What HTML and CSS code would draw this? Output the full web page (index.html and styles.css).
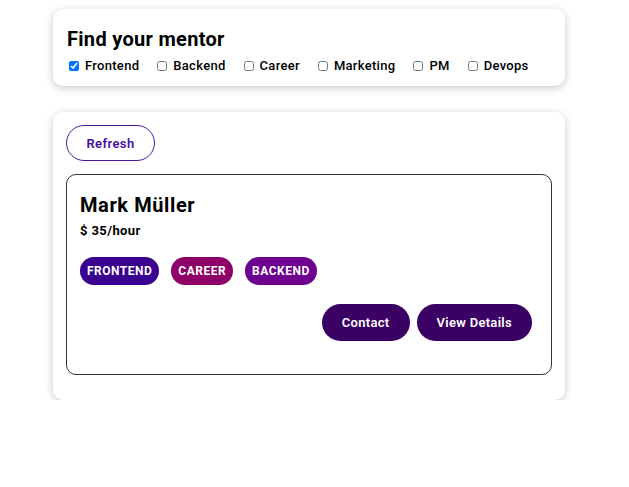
FILE: index.html
```html
<!DOCTYPE html>
<html>
<head>
<meta charset="utf-8">
<link rel="stylesheet" href="styles.css">
</head>
<body>
<div class="page">
  <section class="card filter">
    <h1 class="title">Find your mentor</h1>
    <div class="options">
      <label class="opt"><input type="checkbox" checked> Frontend</label>
      <label class="opt"><input type="checkbox"> Backend</label>
      <label class="opt"><input type="checkbox"> Career</label>
      <label class="opt"><input type="checkbox"> Marketing</label>
      <label class="opt"><input type="checkbox"> PM</label>
      <label class="opt"><input type="checkbox"> Devops</label>
    </div>
  </section>
  <section class="card list">
    <button class="refresh">Refresh</button>
    <article class="mentor">
      <h2 class="name">Mark Müller</h2>
      <div class="price">$ 35/hour</div>
      <div class="tags">
        <span class="tag tag-frontend">FRONTEND</span>
        <span class="tag tag-career">CAREER</span>
        <span class="tag tag-backend">BACKEND</span>
      </div>
      <div class="actions">
        <button class="btn">Contact</button>
        <button class="btn">View Details</button>
      </div>
    </article>
  </section>
</div>
</body>
</html>
```
FILE: styles.css
```css
* { box-sizing: border-box; }
html, body { margin: 0; padding: 0; background: #fff; }
body {
  font-family: Roboto, "Liberation Sans", sans-serif;
  color: #000;
}
.page {
  width: 512px;
  margin: 9px 0 0 53px;
  display: flex;
  flex-direction: column;
  gap: 26px;
}
.card {
  background: #fff;
  border-radius: 10px;
  box-shadow: 0 2px 8px rgba(0,0,0,0.22);
}
.filter {
  padding: 18px 14px 12px 14px;
}
.title {
  margin: 0 0 7px 0;
  font-size: 20px;
  font-weight: 700;
  line-height: 24px;
  letter-spacing: 0.3px;
}
.options {
  display: flex;
  gap: 16px;
  font-size: 13px;
  font-weight: 500;
  line-height: 16px;
  letter-spacing: 0.3px;
}
.opt {
  display: flex;
  align-items: center;
}
.opt input {
  margin: 0 6px 0 2px;
  width: 10px;
  height: 10px;
}
.list {
  padding: 13px 13px 25px 13px;
}
.refresh {
  width: 89px;
  height: 36px;
  border: 1px solid #4a1a9e;
  border-radius: 18px;
  background: #fff;
  color: #4a0fa0;
  font-family: inherit;
  font-size: 13px;
  font-weight: 600;
  letter-spacing: 0.4px;
  cursor: pointer;
}
.mentor {
  margin-top: 13px;
  border: 1px solid #333;
  border-radius: 10px;
  padding: 18px 19px 33px 13px;
}
.name {
  margin: 0;
  font-size: 20px;
  font-weight: 700;
  line-height: 24px;
  letter-spacing: 0.6px;
}
.price {
  margin-top: 6px;
  font-size: 13px;
  font-weight: 700;
  line-height: 16px;
  letter-spacing: 0.4px;
}
.tags {
  margin-top: 18px;
  display: flex;
  gap: 12px;
}
.tag {
  height: 28px;
  padding: 0 7px;
  border-radius: 14px;
  color: #fff;
  font-size: 12px;
  font-weight: 700;
  letter-spacing: 0.5px;
  display: flex;
  align-items: center;
}
.tag-frontend { background: #3a0090; }
.tag-career { background: #8e0068; }
.tag-backend { background: #6e0090; }
.actions {
  margin-top: 19px;
  display: flex;
  justify-content: flex-end;
  gap: 7px;
}
.btn {
  height: 37px;
  padding: 0 20px;
  border: none;
  border-radius: 19px;
  background: #3b0064;
  color: #fff;
  font-family: inherit;
  font-size: 13px;
  font-weight: 600;
  letter-spacing: 0.3px;
}
```
